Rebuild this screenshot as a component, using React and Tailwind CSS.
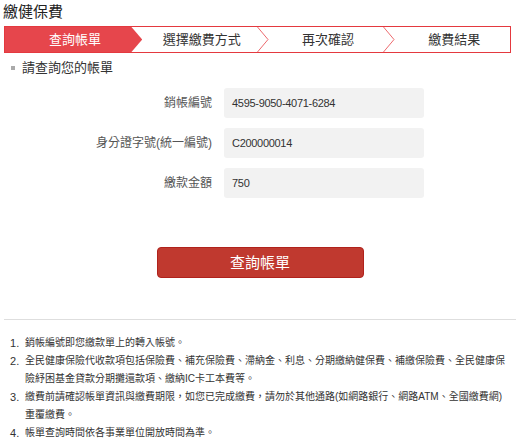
import React from 'react';

const STEPS = ['查詢帳單', '選擇繳費方式', '再次確認', '繳費結果'];

const FIELDS = [
  { label: '銷帳編號', value: '4595-9050-4071-6284' },
  { label: '身分證字號(統一編號)', value: 'C200000014' },
  { label: '繳款金額', value: '750' },
];

const NOTES = [
  '銷帳編號即您繳款單上的轉入帳號。',
  '全民健康保險代收款項包括保險費、補充保險費、滯納金、利息、分期繳納健保費、補繳保險費、全民健康保險紓困基金貸款分期攤還款項、繳納IC卡工本費等。',
  '繳費前請確認帳單資訊與繳費期限，如您已完成繳費，請勿於其他通路(如網路銀行、網路ATM、全國繳費網)重覆繳費。',
  '帳單查詢時間依各事業單位開放時間為準。',
];

function Step({ label, index, active, last }) {
  return (
    <div className="relative flex-1 flex items-center justify-center">
      {active && (
        <svg className="absolute left-0 top-0 h-full w-[calc(100%+11px)]" viewBox="0 0 140 25" preserveAspectRatio="none">
          <polygon points="0,0 129,0 140,12.5 129,25 0,25" fill="#e6464c" />
        </svg>
      )}
      {!last && !active && (
        <svg className="absolute right-[-11px] top-0 h-full w-[12px] z-10" viewBox="0 0 12 25" preserveAspectRatio="none">
          <polyline points="0.5,0 11,12.5 0.5,25" fill="none" stroke="#ec6a6e" strokeWidth="1" />
        </svg>
      )}
      <span className={`relative z-20 text-[13px] ${active ? 'text-white' : 'text-[#333]'} ${index === 0 ? 'pl-[14px]' : 'pl-[15px]'}`}>{label}</span>
    </div>
  );
}

export default function App() {
  return (
    <div className="w-[520px] h-[442px] bg-white px-1 text-[#333]" style={{ fontFamily: '"Liberation Sans", "Noto Sans CJK TC", sans-serif' }}>
      <h1 className="pt-[2px] h-[26px] text-[15px] leading-[20px] font-normal text-[#222] -ml-[1px]">繳健保費</h1>

      <div className="flex h-[27px] border border-[#e4393f] w-[507px]">
        {STEPS.map((s, i) => (
          <Step key={s} label={s} index={i} active={i === 0} last={i === STEPS.length - 1} />
        ))}
      </div>

      <div className="mt-[6px] h-[18px] flex items-center pl-[7px]">
        <span className="w-[4px] h-[4px] bg-[#aaa] mr-[7px]" />
        <span className="text-[13px] leading-[18px] text-[#333]">請查詢您的帳單</span>
      </div>

      <div className="mt-[11px] flex flex-col gap-[10px]">
        {FIELDS.map((f) => (
          <div key={f.label} className="flex items-center gap-3">
            <label className="w-[208px] text-right text-[12px] text-[#555]">{f.label}</label>
            <div className="w-[200px] h-[30px] rounded-[3px] bg-[#f2f2f2] flex items-center px-2 text-[11px] tracking-[-0.3px] text-[#333]">
              {f.value}
            </div>
          </div>
        ))}
      </div>

      <button className="mt-[49px] mx-auto block w-[207px] h-[31px] rounded-[4px] bg-[#c0392f] border border-[#b0221c] text-white text-[15px] leading-none">
        查詢帳單
      </button>

      <div className="mt-[41px] border-t border-[#dedede]" />

      <ol className="mt-[14px] leading-[18px] text-[#333]">
        {NOTES.map((n, i) => (
          <li key={i} className="flex">
            <span className="w-[21px] shrink-0 pl-[6px] text-[11px]">{i + 1}.</span>
            <span className="w-[486px] text-[10px]">{n}</span>
          </li>
        ))}
      </ol>
    </div>
  );
}
